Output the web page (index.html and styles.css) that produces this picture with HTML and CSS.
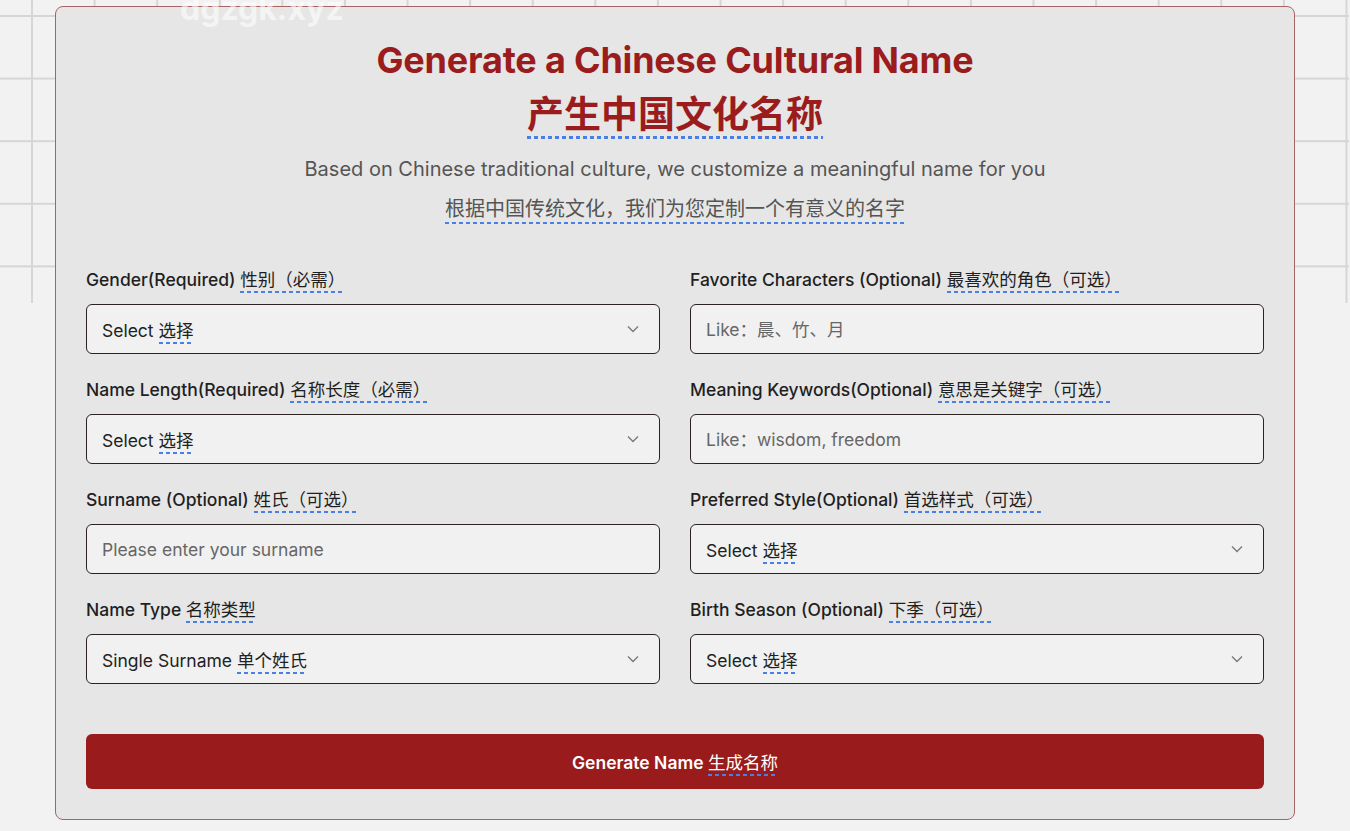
FILE: index.html
```html
<!DOCTYPE html>
<html lang="en">
<head>
  <meta charset="UTF-8">
  <meta name="viewport" content="width=device-width, initial-scale=1.0">
  <title>Chinese Name Generator</title>
  <link rel="stylesheet" href="styles.css">
</head>
<body>

  <div class="grid-bg"></div>
  <div class="watermark">dgzgk.xyz</div>

  <div class="name-card">
    <div class="card-header">
      <h1>
        <span class="title-en">Generate a Chinese Cultural Name</span>
        <span class="title-zh"><span class="zh-mark">产生中国文化名称</span></span>
      </h1>
      <p class="sub-en">Based on Chinese traditional culture, we customize a meaningful name for you</p>
      <p class="sub-zh"><span class="zh-mark">根据中国传统文化，我们为您定制一个有意义的名字</span></p>
    </div>

    <div class="form-grid">
      <div class="field">
        <label>Gender(Required) <span class="zh-mark">性别（必需）</span></label>
        <div class="select-box">
          <span>Select <span class="zh-mark">选择</span></span>
          <svg class="chevron" width="12" height="8" viewBox="0 0 12 8"><polyline points="1,1.5 6,6.5 11,1.5" fill="none" stroke="#7a7a7a" stroke-width="1.4"/></svg>
        </div>
      </div>

      <div class="field">
        <label>Favorite Characters (Optional) <span class="zh-mark">最喜欢的角色（可选）</span></label>
        <input type="text" placeholder="Like：晨、竹、月">
      </div>

      <div class="field">
        <label>Name Length(Required) <span class="zh-mark">名称长度（必需）</span></label>
        <div class="select-box">
          <span>Select <span class="zh-mark">选择</span></span>
          <svg class="chevron" width="12" height="8" viewBox="0 0 12 8"><polyline points="1,1.5 6,6.5 11,1.5" fill="none" stroke="#7a7a7a" stroke-width="1.4"/></svg>
        </div>
      </div>

      <div class="field">
        <label>Meaning Keywords(Optional) <span class="zh-mark">意思是关键字（可选）</span></label>
        <input type="text" placeholder="Like：wisdom, freedom">
      </div>

      <div class="field">
        <label>Surname (Optional) <span class="zh-mark">姓氏（可选）</span></label>
        <input type="text" placeholder="Please enter your surname">
      </div>

      <div class="field">
        <label>Preferred Style(Optional) <span class="zh-mark">首选样式（可选）</span></label>
        <div class="select-box">
          <span>Select <span class="zh-mark">选择</span></span>
          <svg class="chevron" width="12" height="8" viewBox="0 0 12 8"><polyline points="1,1.5 6,6.5 11,1.5" fill="none" stroke="#7a7a7a" stroke-width="1.4"/></svg>
        </div>
      </div>

      <div class="field">
        <label>Name Type <span class="zh-mark">名称类型</span></label>
        <div class="select-box">
          <span>Single Surname <span class="zh-mark">单个姓氏</span></span>
          <svg class="chevron" width="12" height="8" viewBox="0 0 12 8"><polyline points="1,1.5 6,6.5 11,1.5" fill="none" stroke="#7a7a7a" stroke-width="1.4"/></svg>
        </div>
      </div>

      <div class="field">
        <label>Birth Season (Optional) <span class="zh-mark">下季（可选）</span></label>
        <div class="select-box">
          <span>Select <span class="zh-mark">选择</span></span>
          <svg class="chevron" width="12" height="8" viewBox="0 0 12 8"><polyline points="1,1.5 6,6.5 11,1.5" fill="none" stroke="#7a7a7a" stroke-width="1.4"/></svg>
        </div>
      </div>
    </div>

    <button class="generate-btn">Generate Name <span class="zh-mark">生成名称</span></button>
  </div>

</body>
</html>
```

FILE: styles.css
```css
* {
  margin: 0;
  padding: 0;
  box-sizing: border-box;
}

body {
  font-family: 'Inter', 'Noto Sans CJK SC', sans-serif;
  background: #f2f2f2;
  color: #1f1f1f;
  position: relative;
  min-height: 831px;
  padding-top: 6px;
}

/* decorative grid behind the top of the page */
.grid-bg {
  position: absolute;
  top: 0;
  left: 0;
  width: 1349px;
  height: 303px;
  background-image:
    linear-gradient(to right, #d6d6d6 2px, transparent 2px),
    linear-gradient(to bottom, #d6d6d6 2px, transparent 2px);
  background-size: 62.6px 62.6px;
  background-position: 31px 15px;
}

.watermark {
  position: absolute;
  top: -11px;
  left: 180px;
  font-size: 32px;
  font-weight: 700;
  color: rgba(255, 255, 255, 0.6);
  z-index: 2;
}

.name-card {
  position: relative;
  width: 1240px;
  margin: 0 auto;
  background: #e6e6e6;
  border: 1px solid #a56565;
  border-radius: 8px;
  padding: 30px;
}

/* dashed marker under the chinese text */
.zh-mark {
  font-weight: 400;
  padding-bottom: 3px;
  background-image: linear-gradient(to right, #4a7fe6 4px, transparent 4px);
  background-size: 7px 2px;
  background-repeat: repeat-x;
  background-position: 0 100%;
}

.card-header {
  text-align: center;
  margin-bottom: 39px;
}

h1 {
  color: #9b1c1c;
  font-weight: 700;
  font-size: 36px;
}

.title-en {
  display: block;
  line-height: 46px;
  letter-spacing: -0.2px;
}

.title-zh {
  display: block;
  margin-top: 4px;
  line-height: 56px;
  font-size: 37px;
}

.title-zh .zh-mark {
  font-weight: 700;
  padding-bottom: 2px;
  background-size: 7px 3px;
}

.sub-en {
  margin-top: 6px;
  font-size: 20px;
  line-height: 40px;
  color: #555;
}

.sub-zh {
  font-size: 20px;
  line-height: 40px;
  color: #555;
}

.form-grid {
  display: grid;
  grid-template-columns: 1fr 1fr;
  column-gap: 30px;
  row-gap: 24px;
}

.field label {
  display: block;
  font-size: 17.5px;
  line-height: 24px;
  font-weight: 500;
  color: #1f1f1f;
  margin-bottom: 12px;
}

.select-box,
input {
  width: 100%;
  height: 50px;
  border: 1px solid #2b2222;
  border-radius: 6px;
  background: #f1f1f1;
  font-family: inherit;
  font-size: 17.5px;
  color: #222;
  padding: 0 15px;
}

.select-box {
  display: flex;
  align-items: center;
  justify-content: space-between;
}

.chevron {
  margin-right: 5px;
}

input::placeholder {
  color: #666;
}

input:focus {
  outline: none;
}

.generate-btn {
  display: block;
  width: 100%;
  height: 55px;
  margin-top: 50px;
  background: #991b1b;
  color: white;
  border: none;
  border-radius: 6px;
  font-family: inherit;
  font-size: 17.5px;
  font-weight: 600;
  cursor: pointer;
}
```
